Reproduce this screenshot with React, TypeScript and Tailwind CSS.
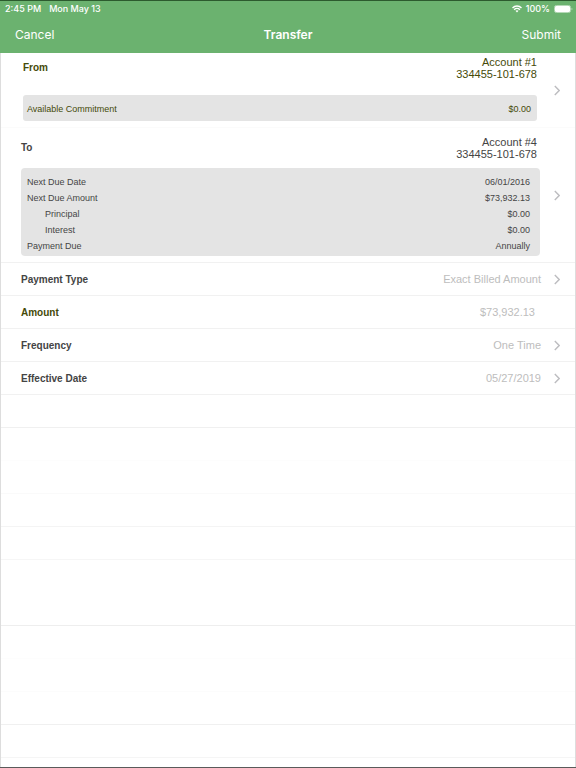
import React from 'react';

type Detail = { label: string; value: string; indent?: boolean };

const dueDetails: Detail[] = [
  { label: 'Next Due Date', value: '06/01/2016' },
  { label: 'Next Due Amount', value: '$73,932.13' },
  { label: 'Principal', value: '$0.00', indent: true },
  { label: 'Interest', value: '$0.00', indent: true },
  { label: 'Payment Due', value: 'Annually' },
];

const emptyRows: string[] = [
  'border-[#f0f0f0]',
  'border-[#fdfdfd]',
  'border-[#fafafa]',
  'border-[#f4f4f4]',
  'border-[#f6f6f6]',
  'border-white',
  'border-[#eeeeee]',
  'border-[#fdfdfd]',
  'border-[#fcfcfc]',
  'border-[#f0f0f0]',
  'border-[#f5f5f5]',
];

function Chevron() {
  return (
    <svg width="6" height="11" viewBox="0 0 6 11" fill="none" aria-hidden="true" className="shrink-0">
      <path d="M0.8 0.9L5.2 5.5L0.8 10.1" stroke="#bdbdc0" strokeWidth="1.4" />
    </svg>
  );
}

function WifiIcon() {
  return (
    <svg width="10" height="8" viewBox="0 0 20 15" fill="none" stroke="white" strokeWidth="3" aria-hidden="true">
      <path d="M1 5.4C6 0.4 14 0.4 19 5.4" />
      <path d="M4.3 8.9C7.5 5.8 12.5 5.8 15.7 8.9" />
      <path d="M6.9 11.2C8.7 9.6 11.3 9.6 13.1 11.2L10 14.6Z" fill="white" stroke="none" />
    </svg>
  );
}

function BatteryIcon() {
  return (
    <svg width="19" height="8" viewBox="0 0 19 8" fill="none" aria-hidden="true">
      <rect x="0.5" y="0.5" width="16" height="7" rx="1.8" stroke="#b5d9b7" />
      <rect x="1" y="1" width="15" height="6" rx="1.2" fill="white" />
      <path d="M17.5 2.7C18.8 3.2 18.8 4.8 17.5 5.3Z" fill="#b5d9b7" />
    </svg>
  );
}

function Account({ title, name, number }: { title: string; name: string; number: string }) {
  return (
    <div className="flex items-center justify-between text-[11px] leading-3">
      <h2 className="text-[10px] font-bold">{title}</h2>
      <p className="text-right">
        {name}
        <br />
        {number}
      </p>
    </div>
  );
}

function ChoiceRow({ label, value }: { label: string; value: string }) {
  return (
    <button
      type="button"
      className="flex h-[33px] w-full items-center border-b border-[#f1f1f1] pr-[15px] pl-5 text-[11px]"
    >
      <span className="text-[10px] font-bold text-[#444444]">{label}</span>
      <span className="mr-[13px] ml-auto text-[#bdbdbd]">{value}</span>
      <Chevron />
    </button>
  );
}

export default function App() {
  return (
    <div className="flex min-h-screen flex-col border-y border-t-[#2c5a2e] border-b-[#5a5a5a] bg-white font-['Liberation_Sans',Arial,sans-serif] text-[#444444]">
      <header className="bg-[#6bb26f] font-[Inter,'Liberation_Sans',sans-serif] text-white">
        <div className="flex h-[15px] items-center justify-between pr-[3px] pl-[5px] text-[9px] font-medium">
          <div className="flex gap-2">
            <span>2:45 PM</span>
            <span>Mon May 13</span>
          </div>
          <div className="flex items-center gap-1">
            <WifiIcon />
            <span>100%</span>
            <BatteryIcon />
          </div>
        </div>
        <nav className="grid h-[37px] grid-cols-3 items-center px-[15px] text-[12px]">
          <button type="button" className="justify-self-start">Cancel</button>
          <h1 className="justify-self-center font-semibold">Transfer</h1>
          <button type="button" className="justify-self-end">Submit</button>
        </nav>
      </header>

      <main className="flex flex-1 flex-col border-x border-[#dddddd]">
        <section className="flex border-b border-[#fbfbfb] text-[#454a08]">
          <div className="flex-1 pt-[3px] pb-1.5 pl-[22px]">
            <Account title="From" name="Account #1" number="334455-101-678" />
            <dl className="mt-[15px] flex items-center justify-between rounded-[3px] bg-[#e4e4e4] pt-1.5 pr-1.5 pb-1 pl-1 text-[9px] leading-4">
              <dt>Available Commitment</dt>
              <dd>$0.00</dd>
            </dl>
          </div>
          <button type="button" aria-label="Choose the from account" className="flex items-center pr-[15px] pl-[17px]">
            <Chevron />
          </button>
        </section>

        <section className="flex border-b border-[#f1f1f1]">
          <div className="flex-1 pt-2 pb-1.5 pl-5">
            <div className="pr-[3px]">
              <Account title="To" name="Account #4" number="334455-101-678" />
            </div>
            <dl className="mt-2 rounded-[4px] bg-[#e4e4e4] pt-1.5 pr-2.5 pb-0.5 pl-1.5 text-[9px] leading-4">
              {dueDetails.map((d) => (
                <div key={d.label} className="flex justify-between">
                  <dt className={d.indent ? 'pl-[18px]' : ''}>{d.label}</dt>
                  <dd>{d.value}</dd>
                </div>
              ))}
            </dl>
          </div>
          <button type="button" aria-label="Choose the to account" className="flex items-center pr-[15px] pl-3.5">
            <Chevron />
          </button>
        </section>

        <ChoiceRow label="Payment Type" value="Exact Billed Amount" />
        <div className="flex h-[33px] items-center border-b border-[#f1f1f1] pr-10 pl-5 text-[11px]">
          <label htmlFor="amount" className="text-[10px] font-bold text-[#454a08]">Amount</label>
          <input
            id="amount"
            type="text"
            defaultValue="$73,932.13"
            className="min-w-0 flex-1 bg-transparent text-right text-[#bdbdbd] outline-none"
          />
        </div>
        <ChoiceRow label="Frequency" value="One Time" />
        <ChoiceRow label="Effective Date" value="05/27/2019" />

        {emptyRows.map((line, i) => (
          <div key={i} className={`h-[33px] border-b ${line}`} />
        ))}
      </main>
    </div>
  );
}
